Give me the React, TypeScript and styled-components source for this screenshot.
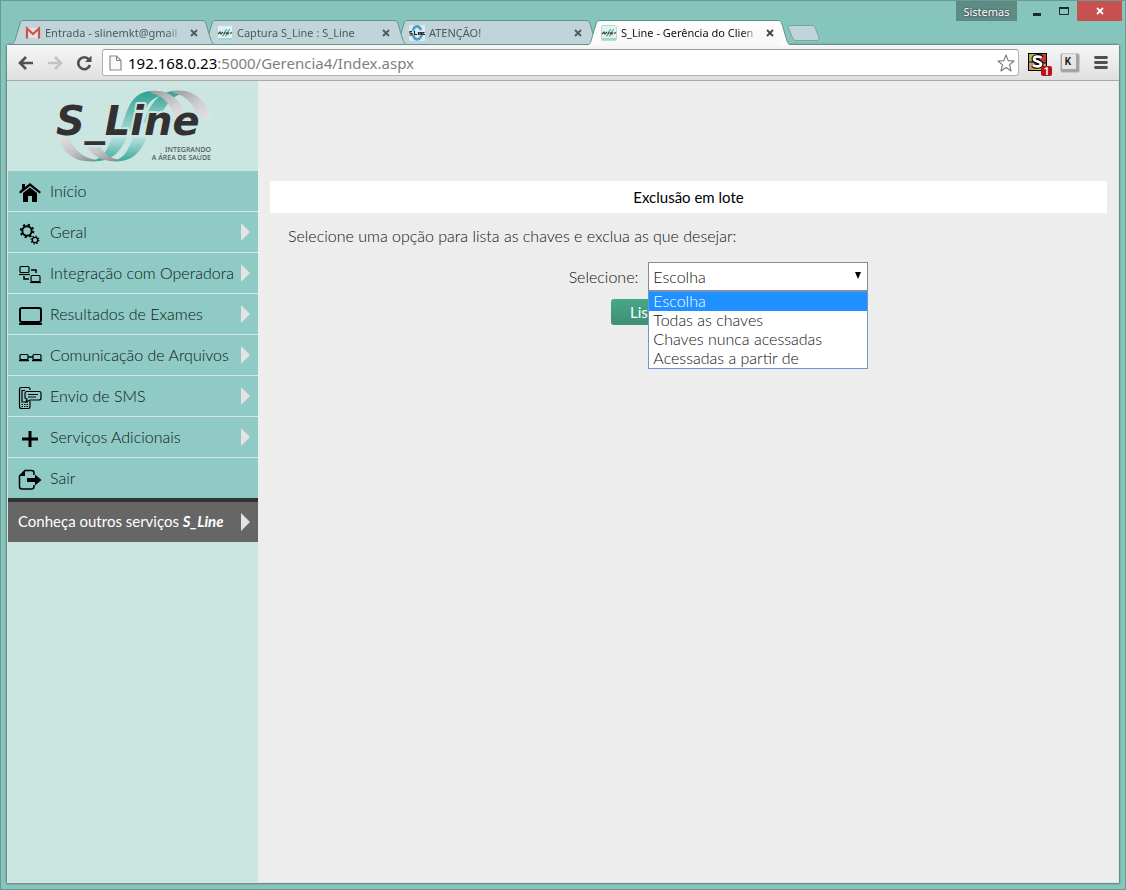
import React from "react";
import styled, { createGlobalStyle, css } from "styled-components";

const GlobalStyle = createGlobalStyle`
  * { box-sizing: border-box; }
  html, body { margin: 0; padding: 0; }
  button, select, input { font: inherit; color: inherit; }
`;

const uiFont = '"Noto Sans", "Open Sans", sans-serif';
const pageFont = 'Lato, "Open Sans", sans-serif';

const Frame = styled.div`
  min-height: 100vh;
  display: flex;
  flex-direction: column;
  background: #86c5bc;
  border: 1px solid #6a9a93;
  padding: 0 5px 5px;
  font-family: ${uiFont};
`;

const TitleBar = styled.header`
  display: flex;
  align-items: flex-start;
  height: 43px;
  padding-left: 6px;
`;

const TabStrip = styled.nav`
  display: flex;
  align-self: flex-end;
  flex: 1;
  min-width: 0;
`;

const TabBox = styled.div<{ $active?: boolean; $level: number }>`
  position: relative;
  z-index: ${(p) => p.$level};
  display: flex;
  width: 202px;
  height: 24px;
  margin-right: -10px;
  ${(p) =>
    p.$active &&
    css`
      height: 25px;
      margin-bottom: -1px;
    `}
`;

const TabEdge = styled.svg<{ $right?: boolean }>`
  flex: none;
  display: block;
  width: 12px;
  height: 100%;
  ${(p) => p.$right && "transform: scaleX(-1);"}
`;

const TabBody = styled.div<{ $active?: boolean }>`
  flex: 1;
  min-width: 0;
  display: flex;
  align-items: center;
  gap: 4px;
  padding: 0 1px;
  border-top: 1px solid #64928d;
  background: ${(p) => (p.$active ? "linear-gradient(#ffffff, #f7f7f7)" : "#c1d4d9")};
`;

const TabLink = styled.a<{ $active?: boolean }>`
  flex: 1;
  min-width: 0;
  overflow: hidden;
  white-space: nowrap;
  text-decoration: none;
  line-height: 16px;
  font-size: 11px;
  color: ${(p) => (p.$active ? "#111" : "#4c5a5c")};
  mask-image: linear-gradient(to right, #000 88%, transparent);
`;

const PlainButton = styled.button`
  display: flex;
  align-items: center;
  justify-content: center;
  flex: none;
  border: 0;
  padding: 0;
  background: none;
`;

const TabClose = styled(PlainButton)`
  width: 14px;
  height: 16px;
`;

const NewTab = styled(PlainButton)`
  width: 34px;
  height: 18px;
  margin: 4px 0 0 7px;
`;

const WindowControls = styled.div`
  display: flex;
  flex: none;
  height: 20px;
  margin-right: -2px;
`;

const Profile = styled(PlainButton)`
  width: 61px;
  margin-right: 6px;
  background: #5f8b85;
  color: #fff;
  font-size: 11px;
  text-shadow: 0 0 2px #222;
`;

const ControlButton = styled(PlainButton)<{ $close?: boolean }>`
  width: ${(p) => (p.$close ? "45px" : "27px")};
  background: ${(p) => (p.$close ? "#c75050" : "transparent")};
`;

const BrowserWindow = styled.div`
  flex: 1;
  display: flex;
  flex-direction: column;
  border: 1px solid #64918b;
  border-radius: 3px 3px 1px 1px;
  box-shadow: 0 0 2px #5c8c85;
`;

const Toolbar = styled.div`
  display: flex;
  align-items: center;
  height: 36px;
  padding: 0 3px 0 4px;
  background: linear-gradient(#f7f7f7, #dfdfdf);
  border-bottom: 1px solid #aaa8a8;
`;

const ToolButton = styled(PlainButton)`
  width: 29px;
  height: 26px;
`;

const Omnibox = styled.form`
  flex: 1;
  min-width: 0;
  display: flex;
  align-items: center;
  height: 27px;
  margin: 0 4px;
  padding: 0 3px 0 6px;
  background: #fff;
  border: 1px solid #b3b3b3;
  border-top-color: #9c9c9c;
  border-radius: 3px;
`;

const Address = styled.a`
  flex: 1;
  min-width: 0;
  margin-left: 6px;
  overflow: hidden;
  white-space: nowrap;
  font-size: 15px;
  line-height: 22px;
  color: #808080;
  text-decoration: none;
`;

const Host = styled.span`
  color: #000;
`;

const ExtensionButton = styled(PlainButton)`
  width: 31px;
  height: 30px;
`;

const Page = styled.div`
  flex: 1;
  display: flex;
  background: #ededed;
  border: 1px solid #e2e2e2;
  border-top: 0;
  font-family: ${pageFont};
  font-size: 16px;
  color: #111;
`;

const Sidebar = styled.aside`
  flex: none;
  width: 250px;
  background: #cbe6e1;
`;

const LogoArea = styled.div`
  height: 90px;
`;

const Menu = styled.ul`
  list-style: none;
  margin: 0;
  padding: 0;
`;

const MenuItem = styled.li`
  background: #90cac4;
  & + & {
    border-top: 1px solid #cfe8e5;
  }
`;

const MenuLink = styled.a`
  display: flex;
  align-items: center;
  height: 40px;
  padding: 0 8px 0 10px;
  color: #0c1716;
  font-weight: 300;
  text-decoration: none;
`;

const MenuIcon = styled.svg`
  flex: none;
  width: 24px;
  height: 24px;
  margin: 4px 8px 0 0;
`;

const MenuText = styled.span`
  flex: 1;
  padding-bottom: 2px;
  white-space: nowrap;
`;

const Arrow = styled.span`
  flex: none;
  border: 9px solid transparent;
  border-left-color: #e3e3e3;
  border-right-width: 0;
`;

const PromoLink = styled(MenuLink)`
  height: 44px;
  border-top: 4px solid #333;
  background: #666;
  color: #fff;
  font-size: 15px;
  font-weight: 400;
`;

const Brand = styled.em`
  font-weight: 700;
`;

const Main = styled.main`
  flex: 1;
  min-width: 0;
  padding: 100px 11px 0 12px;
`;

const Heading = styled.h1`
  margin: 0;
  background: #fff;
  color: #000;
  font-size: 15px;
  line-height: 32px;
  font-weight: 400;
  text-align: center;
`;

const Intro = styled.p`
  margin: 13px 18px 0;
  line-height: 20px;
  font-weight: 300;
`;

const LotForm = styled.form`
  display: flex;
  flex-direction: column;
  align-items: center;
  gap: 8px;
  margin-top: 16px;
`;

const Field = styled.div`
  display: flex;
  align-items: center;
  padding-left: 60px;
  gap: 10px;
  font-weight: 300;
`;

const SelectWrap = styled.div`
  position: relative;
  width: 220px;
`;

const Select = styled.select`
  appearance: none;
  display: block;
  width: 100%;
  height: 29px;
  padding: 0 4px;
  border: 1px solid #8a8a8a;
  border-radius: 0;
  background: #fff;
  font-weight: 300;
`;

const SelectArrow = styled.svg`
  position: absolute;
  top: 10px;
  right: 6px;
  width: 8px;
  height: 7px;
  pointer-events: none;
`;

const OptionList = styled.ul`
  position: absolute;
  z-index: 5;
  top: 100%;
  left: 0;
  right: 0;
  margin: 0;
  padding: 0;
  list-style: none;
  background: #fff;
  border: 1px solid #7096d0;
`;

const Option = styled.li<{ $selected?: boolean }>`
  height: 19px;
  padding: 0 4px;
  line-height: 18px;
  color: ${(p) => (p.$selected ? "#fff" : "#111")};
  background: ${(p) => (p.$selected ? "#1e90ff" : "transparent")};
`;

const SubmitButton = styled.button`
  width: 155px;
  height: 26px;
  padding: 0 19px;
  border: 0;
  border-radius: 3px;
  background: linear-gradient(#47a888, #3f8f74);
  color: #fff;
  font-size: 15px;
  text-align: left;
`;

function CloseGlyph({ color = "#4f5b5c" }: { color?: string }) {
  return (
    <svg width="8" height="8" viewBox="0 0 8 8">
      <path d="M1 1L7 7M7 1L1 7" stroke={color} strokeWidth="1.800" />
    </svg>
  );
}

function GmailIcon() {
  return (
    <svg width="16" height="16" viewBox="0 0 16 16">
      <path d="M2 3H14V13H2Z" fill="#e6e1df" />
      <path d="M2 13.500V3.500L8 9L14 3.500V13.500" fill="none" stroke="#cc5448" strokeWidth="2.200" />
    </svg>
  );
}

function SLineIcon() {
  return (
    <svg width="16" height="16" viewBox="0 0 16 16">
      <rect x="0.500" y="0.500" width="15" height="15" rx="1" fill="#e2f2ef" stroke="#b5dcd6" />
      <path d="M1 13H15V15H1Z" fill="#a5d6ce" />
      <path d="M5 11C8 11 7 5 10 4.500M8 11C11 11 10 5 13 4.500" fill="none" stroke="#3aa596" strokeWidth="1.200" />
      <path d="M1 9L3 7L4 9L6 7M7 9L8 7M9 9L10 7.500L11 9L12 7.500M13 8.500L15 7.500" fill="none" stroke="#444" strokeWidth="1.200" />
    </svg>
  );
}

function BlueIcon() {
  return (
    <svg width="16" height="16" viewBox="0 0 16 16">
      <rect width="16" height="16" fill="#dcecf0" />
      <path d="M4 6C5 0 10 0 12 5M4 10C6 16 11 16 13 9" fill="none" stroke="#4da0d0" strokeWidth="2.600" />
      <path d="M3 6.500H1V8L3 8.500V10H0.500M5.500 6V9.500H8M9.500 7V10M11 10V7.500H12.500V10M15.500 7.500H14V9.500H16" fill="none" stroke="#222" strokeWidth="1.200" />
    </svg>
  );
}

interface TabProps {
  icon: React.ReactNode;
  title: string;
  active?: boolean;
  level: number;
}

function Tab({ icon, title, active, level }: TabProps) {
  const fill = active ? "#fbfbfb" : "#c1d4d9";
  const edge = (right?: boolean) => (
    <TabEdge $right={right} viewBox="0 0 12 25" preserveAspectRatio="none" aria-hidden="true">
      <path d="M0 25C2 24 2 23 3 21L8 4C9 1 10 0.500 12 0.500V25Z" fill={fill} />
      <path d="M0 25C2 24 2 23 3 21L8 4C9 1 10 0.500 12 0.500" fill="none" stroke="#64928d" />
    </TabEdge>
  );
  return (
    <TabBox $active={active} $level={level}>
      {edge()}
      <TabBody $active={active}>
        {icon}
        <TabLink href="#" $active={active}>{title}</TabLink>
        <TabClose aria-label={"Fechar " + title}>
          <CloseGlyph color={active ? "#444" : undefined} />
        </TabClose>
      </TabBody>
      {edge(true)}
    </TabBox>
  );
}

function Logo() {
  return (
    <svg width="250" height="90" viewBox="0 0 250 90" role="img" aria-label="S_Line Integrando a área de saúde">
      <defs>
        <linearGradient id="teal" x1="0" y1="0" x2="0" y2="1">
          <stop offset="0" stopColor="#2f9f92" />
          <stop offset="1" stopColor="#a5dad3" />
        </linearGradient>
        <linearGradient id="tealUp" x1="0" y1="0" x2="0" y2="1">
          <stop offset="0" stopColor="#b9e3de" />
          <stop offset="1" stopColor="#3fa89c" />
        </linearGradient>
        <linearGradient id="grey" x1="0" y1="0" x2="1" y2="1">
          <stop offset="0" stopColor="#9c9a9c" />
          <stop offset="0.600" stopColor="#d2d2d4" />
          <stop offset="1" stopColor="#e4e4e6" />
        </linearGradient>
        <linearGradient id="greyUp" x1="0" y1="0" x2="1" y2="1">
          <stop offset="0" stopColor="#e4e4e6" />
          <stop offset="0.500" stopColor="#c4c4c6" />
          <stop offset="1" stopColor="#858486" />
        </linearGradient>
      </defs>
      <path d="M135 42C142 24 150 10 167 10C171 10 174 11 177 12C163 14 155 28 149 42Z" fill="url(#teal)" />
      <path d="M165 10C188 7 199 22 203 38H190C187 25 179 14 165 12Z" fill="url(#grey)" />
      <path d="M112 50C119 32 121 10 145 10C151 10 155 11 158 14C139 15 135 33 127 50Z" fill="url(#teal)" />
      <path d="M143 10C164 8 174 22 180 38H168C163 24 156 15 143 12Z" fill="url(#grey)" />
      <path d="M49 56C55 72 67 83 90 80V79C75 78 66 68 60 56Z" fill="url(#greyUp)" />
      <path d="M104 56C100 68 95 78 83 80C104 82 113 70 119 56Z" fill="url(#tealUp)" />
      <path d="M75 61C82 73 93 82 112 80V79C100 77 94 71 89 59Z" fill="url(#greyUp)" />
      <path d="M125 56C121 68 116 78 105 80C125 82 133 70 139 56Z" fill="url(#tealUp)" />
      <g fontFamily='"DejaVu Sans", sans-serif' fontSize="40" fontWeight="700" fontStyle="italic" strokeLinejoin="round">
        <text x="48" y="54" fill="#343132" stroke="#cbe6e1" strokeWidth="4" paintOrder="stroke">S_Line</text>
      </g>
      <g fontFamily='"Noto Sans", sans-serif' fontSize="7" fontWeight="500" fill="#4f5857" textAnchor="end">
        <text x="203" y="71">INTEGRANDO</text>
        <text x="203" y="79">A ÁREA DE SAÚDE</text>
      </g>
    </svg>
  );
}

const icons: Record<string, React.ReactNode> = {
  home: (
    <g>
      <path d="M4 3H7V6L12 2L23 11L21.500 12.500L12 5L2.500 12.500L1 11L4 8Z" />
      <path d="M5 12L12 6.500L19 12V21H14V15H10V21H5Z" />
    </g>
  ),
  gears: (
    <g fill="none" stroke="#000">
      <circle cx="9" cy="9" r="4.700" strokeWidth="2" />
      <circle cx="9" cy="9" r="6.300" strokeWidth="2" strokeDasharray="2.200 2.748" />
      <circle cx="17" cy="18" r="2.700" strokeWidth="1.300" />
      <circle cx="17" cy="18" r="3.800" strokeWidth="1.300" strokeDasharray="1.300 1.685" />
    </g>
  ),
  network: (
    <g fill="none" stroke="#000" strokeWidth="1.200">
      <rect x="2" y="3.500" width="9" height="6" rx="1" />
      <path d="M1 11.500H12" />
      <rect x="13" y="12.500" width="9" height="6" rx="1" />
      <path d="M12 19.500H23" />
      <path d="M13 7H18V10M6 13V16H11" strokeWidth="1.500" />
    </g>
  ),
  laptop: (
    <g>
      <rect x="2" y="4" width="21" height="14" rx="2" fill="none" stroke="#000" strokeWidth="2" />
      <path d="M1 19H24V20.500Q24 21 22 21H3Q1 21 1 20.500Z" />
    </g>
  ),
  link: (
    <g fill="none" stroke="#000" strokeWidth="1.200">
      <rect x="2" y="9.500" width="8" height="5" rx="1" />
      <rect x="15" y="9.500" width="8" height="5" rx="1" />
      <path d="M1 15.500H11M14 15.500H24M10 12H15" strokeWidth="1.500" />
    </g>
  ),
  phone: (
    <g fill="none" stroke="#000" strokeWidth="1.200">
      <path d="M12 4V3Q12 1.500 10.500 1.500H3.500Q1.500 1.500 1.500 3.500V20.500Q1.500 22.500 3.500 22.500H10.500Q12 22.500 12 20.500V15" />
      <path d="M7 4.500H4V16H10" />
      <path d="M9 5.500H21Q23 5.500 23 7V12Q23 14 21 14H12L8 16L9 13Q7 13 7 11.500V7Q7 5.500 9 5.500Z" />
      <path d="M10 8.500H20M10 11H18" />
      <path d="M3.500 18.500H10M3.500 20.500H10" strokeDasharray="1.500 1" />
    </g>
  ),
  plus: <path d="M10.500 4H13.500V10.500H20V13.500H13.500V20H10.500V13.500H4V10.500H10.500Z" />,
  exit: (
    <g>
      <path d="M16 7V5Q16 2.500 13.500 2.500H7L1.500 8V18.500Q1.500 21 4 21H13.500Q16 21 16 18.500V17" fill="none" stroke="#000" strokeWidth="1.500" />
      <path d="M7 2V8H1.500Z" />
      <path d="M9 10H17V6.500L23.500 12L17 17.500V14H9Z" />
    </g>
  ),
};

const menu = [
  { icon: "home", label: "Início", sub: false },
  { icon: "gears", label: "Geral", sub: true },
  { icon: "network", label: "Integração com Operadora", sub: true },
  { icon: "laptop", label: "Resultados de Exames", sub: true },
  { icon: "link", label: "Comunicação de Arquivos", sub: true },
  { icon: "phone", label: "Envio de SMS", sub: true },
  { icon: "plus", label: "Serviços Adicionais", sub: true },
  { icon: "exit", label: "Sair", sub: false },
];

const options = ["Escolha", "Todas as chaves", "Chaves nunca acessadas", "Acessadas a partir de"];

export default function App() {
  return (
    <>
      <GlobalStyle />
      <Frame>
        <TitleBar>
          <TabStrip>
            <Tab icon={<GmailIcon />} title="Entrada - slinemkt@gmail" level={3} />
            <Tab icon={<SLineIcon />} title="Captura S_Line : S_Line" level={2} />
            <Tab icon={<BlueIcon />} title="ATENÇÃO!" level={1} />
            <Tab icon={<SLineIcon />} title="S_Line - Gerência do Clien" active level={4} />
            <NewTab aria-label="Nova guia">
              <svg width="34" height="18" viewBox="0 0 34 18">
                <path d="M3 1.500H25Q27 1.500 28 3L32 14Q32.500 16.500 30 16.500H9Q7 16.500 6 15L1.500 4Q1 1.500 3 1.500Z" fill="#c1d4d9" stroke="#74a8a0" />
              </svg>
            </NewTab>
          </TabStrip>
          <WindowControls>
            <Profile>Sistemas</Profile>
            <ControlButton aria-label="Minimizar">
              <svg width="10" height="12" viewBox="0 0 10 12"><path d="M1 8H9V11H1Z" fill="#1c2b2a" /></svg>
            </ControlButton>
            <ControlButton aria-label="Maximizar">
              <svg width="10" height="8" viewBox="0 0 10 8"><path d="M0.500 1H9.500V7.500H0.500Z" fill="none" stroke="#1c2b2a" /><path d="M0 0H10V2H0Z" fill="#1c2b2a" /></svg>
            </ControlButton>
            <ControlButton $close aria-label="Fechar"><CloseGlyph color="#fff" /></ControlButton>
          </WindowControls>
        </TitleBar>
        <BrowserWindow>
          <Toolbar>
            <ToolButton aria-label="Voltar">
              <svg width="16" height="14" viewBox="0 0 16 14"><path d="M8 1L2 7L8 13M2 7H15" fill="none" stroke="#505050" strokeWidth="2.600" /></svg>
            </ToolButton>
            <ToolButton aria-label="Avançar">
              <svg width="16" height="14" viewBox="0 0 16 14"><path d="M8 1L14 7L8 13M14 7H1" fill="none" stroke="#c3c3c3" strokeWidth="2.600" /></svg>
            </ToolButton>
            <ToolButton aria-label="Recarregar">
              <svg width="16" height="16" viewBox="0 0 16 16"><path d="M13 4.500A6 6 0 1 0 14 10" fill="none" stroke="#505050" strokeWidth="2.600" /><path d="M15.500 0.500V7H9Z" fill="#505050" /></svg>
            </ToolButton>
            <Omnibox>
              <svg width="13" height="16" viewBox="0 0 13 16"><path d="M1 1H7.500L12 5.500V15H1ZM7.500 1V5.500H12" fill="#fafafa" stroke="#8a8a8a" strokeWidth="1.200" /></svg>
              <Address href="#"><Host>192.168.0.23</Host>:5000/Gerencia4/Index.aspx</Address>
              <PlainButton type="button" aria-label="Adicionar aos favoritos">
                <svg width="18" height="18" viewBox="0 0 18 18"><path d="M9 1L11.200 6.600L17 7L12.500 10.800L14 17L9 13.500L4 17L5.500 10.800L1 7L6.800 6.600Z" fill="#fff" stroke="#777" strokeWidth="1.100" strokeLinejoin="round" /></svg>
              </PlainButton>
            </Omnibox>
            <ExtensionButton aria-label="Extensão S">
              <svg width="26" height="26" viewBox="0 0 26 26">
                <rect x="2.500" y="3.500" width="18" height="17" fill="#c39a6c" stroke="#000" />
                <path d="M3 4H11V11H3Z" fill="#a5b64e" />
                <path d="M11 4H20V13H11Z" fill="#c43a2a" />
                <path d="M3 12H9M11 4V8M14 13H20" stroke="#000" />
                <path d="M10 18H15V20H10Z" fill="#f3d21c" />
                <path d="M15.500 8C14 6 8 6 8 9C8 12 15 11 15 14C15 17 9 17 7 15" fill="none" stroke="#000" strokeWidth="5" />
                <path d="M15.500 8C14 6 8 6 8 9C8 12 15 11 15 14C15 17 9 17 7 15" fill="none" stroke="#fff" strokeWidth="2.800" />
                <rect x="15" y="16" width="11" height="10" rx="2" fill="#b5131f" />
                <text x="20.500" y="25" textAnchor="middle" fontFamily="Roboto, sans-serif" fontSize="10" fontWeight="700" fill="#fff">1</text>
              </svg>
            </ExtensionButton>
            <ExtensionButton aria-label="Extensão K">
              <svg width="20" height="20" viewBox="0 0 20 20">
                <rect x="0.500" y="0.500" width="19" height="19" rx="2" fill="#a5a5a5" stroke="#c9c9c9" />
                <rect x="2" y="1" width="14" height="15" rx="1" fill="#e6e6e6" />
                <text x="8" y="12" textAnchor="middle" fontFamily="Roboto, sans-serif" fontSize="10" fontWeight="700" fill="#222">K</text>
              </svg>
            </ExtensionButton>
            <ExtensionButton aria-label="Menu">
              <svg width="14" height="13" viewBox="0 0 14 13"><path d="M1.500 1.500H12.500M1.500 6.500H12.500M1.500 11.500H12.500" stroke="#505050" strokeWidth="2.800" strokeLinecap="round" /></svg>
            </ExtensionButton>
          </Toolbar>
          <Page>
            <Sidebar>
              <LogoArea><Logo /></LogoArea>
              <Menu>
                {menu.map((item) => (
                  <MenuItem key={item.label}>
                    <MenuLink href="#">
                      <MenuIcon viewBox="0 0 24 24" aria-hidden="true">{icons[item.icon]}</MenuIcon>
                      <MenuText>{item.label}</MenuText>
                      {item.sub && <Arrow />}
                    </MenuLink>
                  </MenuItem>
                ))}
              </Menu>
              <PromoLink href="#">
                <MenuText>Conheça outros serviços <Brand>S_Line</Brand></MenuText>
                <Arrow />
              </PromoLink>
            </Sidebar>
            <Main>
              <Heading>Exclusão em lote</Heading>
              <Intro>Selecione uma opção para lista as chaves e exclua as que desejar:</Intro>
              <LotForm>
                <Field>
                  <label htmlFor="filtro">Selecione:</label>
                  <SelectWrap>
                    <Select id="filtro" defaultValue="Escolha">
                      {options.map((o) => <option key={o}>{o}</option>)}
                    </Select>
                    <SelectArrow viewBox="0 0 8 7" aria-hidden="true"><path d="M1 0H7L4 7Z" /></SelectArrow>
                    <OptionList role="listbox" aria-label="Opções">
                      {options.map((o, i) => (
                        <Option key={o} role="option" aria-selected={i === 0} $selected={i === 0}>{o}</Option>
                      ))}
                    </OptionList>
                  </SelectWrap>
                </Field>
                <SubmitButton type="button">Listar</SubmitButton>
              </LotForm>
            </Main>
          </Page>
        </BrowserWindow>
      </Frame>
    </>
  );
}
